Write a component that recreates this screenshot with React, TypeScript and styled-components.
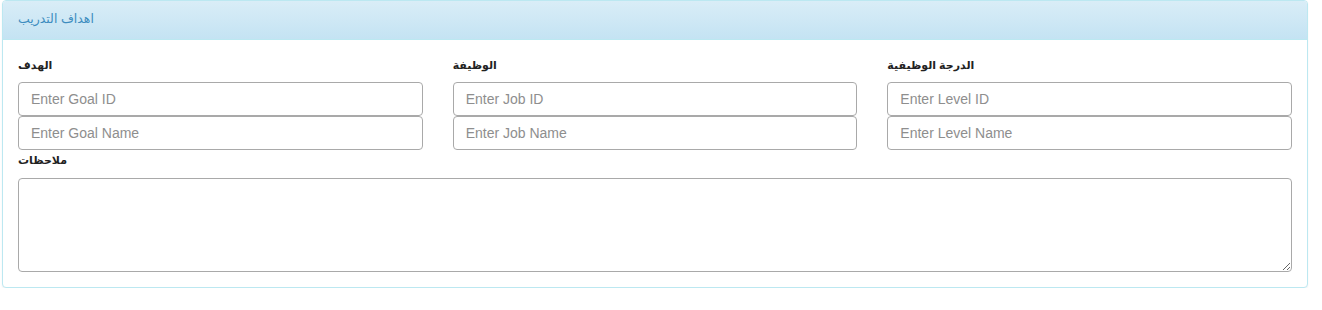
import styled, { createGlobalStyle } from 'styled-components';

const GlobalStyle = createGlobalStyle`
  html, body {
    margin: 0;
    padding: 0;
    background: #fff;
  }
  body {
    font-family: "Liberation Sans", "DejaVu Sans", Arial, sans-serif;
    font-size: 14px;
    line-height: 1.42857;
    color: #333;
  }
  * {
    box-sizing: border-box;
  }
`;

const Page = styled.div`
  padding: 0 0 0 2px;
`;

const Panel = styled.div`
  width: 1306px;
  border: 1px solid #bce8f1;
  border-radius: 4px;
  background: #fff;
  box-shadow: 0 1px 2px rgba(0, 0, 0, 0.05);
  overflow: hidden;
`;

const PanelHeading = styled.div`
  height: 39px;
  padding: 10px 15px 0;
  color: #3d8dbf;
  font-size: 12.5px;
  background-image: linear-gradient(to bottom, #d9edf7 0, #c4e3f3 100%);
  border-bottom: 1px solid #bce8f1;
`;

const PanelBody = styled.div`
  padding: 15px 15px 15px;
`;

const Row = styled.div`
  display: grid;
  grid-template-columns: repeat(3, 1fr);
  column-gap: 30px;
`;

const Field = styled.div`
  display: flex;
  flex-direction: column;
`;

const Label = styled.label`
  display: block;
  height: 20px;
  line-height: 20px;
  margin-bottom: 7px;
  font-weight: bold;
  font-size: 11px;
  color: #222;
`;

const Input = styled.input`
  display: block;
  width: 100%;
  height: 34px;
  padding: 6px 12px;
  font-family: inherit;
  font-size: 14px;
  color: #555;
  background: #fff;
  border: 1px solid #a9a9a9;
  border-radius: 4px;
  outline: none;
  &::placeholder {
    color: #8e8e8e;
  }
`;

const NotesLabel = styled(Label)`
  margin-top: 0;
  margin-bottom: 8px;
`;

const TextArea = styled.textarea`
  display: block;
  width: 100%;
  height: 94px;
  padding: 6px 12px;
  font-family: inherit;
  font-size: 14px;
  border: 1px solid #a9a9a9;
  border-radius: 4px;
  outline: none;
  resize: vertical;
`;

const fields = [
  { label: 'الهدف', id: 'Enter Goal ID', name: 'Enter Goal Name' },
  { label: 'الوظيفة', id: 'Enter Job ID', name: 'Enter Job Name' },
  { label: 'الدرجة الوظيفية', id: 'Enter Level ID', name: 'Enter Level Name' },
];

const App = () => {
  return (
    <Page>
      <GlobalStyle />
      <Panel>
        <PanelHeading>اهداف التدريب</PanelHeading>
        <PanelBody>
          <Row>
            {fields.map((f) => (
              <Field key={f.label}>
                <Label>{f.label}</Label>
                <Input placeholder={f.id} />
                <Input placeholder={f.name} />
              </Field>
            ))}
          </Row>
          <NotesLabel>ملاحظات</NotesLabel>
          <TextArea />
        </PanelBody>
      </Panel>
    </Page>
  );
};

export default App;
